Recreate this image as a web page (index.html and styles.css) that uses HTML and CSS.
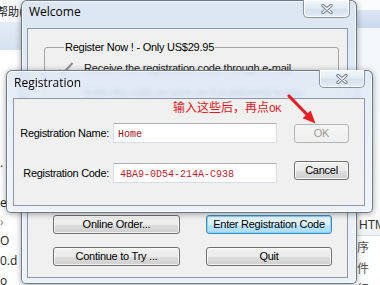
FILE: index.html
```html
<!DOCTYPE html>
<html>
<head>
<meta charset="utf-8">
<title>Registration</title>
<link rel="stylesheet" href="styles.css">
</head>
<body>
<div class="desk">
  <div class="bg-left">
    <div class="menu"><span class="menu-text">帮助(</span></div>
    <div class="band"></div>
    <ul class="files">
      <li>.</li>
      <li></li>
      <li>e</li>
      <li class="short">›</li>
      <li>O</li>
      <li>0.d</li>
      <li>o</li>
    </ul>
  </div>

  <div class="bg-right">
    <div class="r-top"></div>
    <div class="r-band"></div>
    <div class="r-body"></div>
    <div class="r-head">HTM</div>
    <div class="r-row">序</div>
    <div class="r-row">件</div>
    <div class="r-row">行</div>
  </div>

  <section class="win welcome">
    <header class="titlebar">
      <span class="title">Welcome</span>
      <span class="close"><svg width="12" height="10" viewBox="0 0 12 10"><path d="M2 1.5 L10 8.5 M10 1.5 L2 8.5" stroke="#707b88" stroke-width="3.4" stroke-linecap="round"/><path d="M2 1.5 L10 8.5 M10 1.5 L2 8.5" stroke="#fff" stroke-width="1.5" stroke-linecap="round"/></svg></span>
    </header>
    <div class="client">
      <fieldset class="group">
        <legend>Register Now ! - Only US$29.95</legend>
        <div class="opt">
          <svg class="tick" width="17" height="14" viewBox="0 0 17 14"><path d="M2 9 L6 12.5 L15.5 2" fill="none" stroke="#8a8f96" stroke-width="2"/></svg>
          <span>Receive the registration code through e-mail</span>
        </div>
        <div class="opt">
          <span class="opt-sub">Enter the code as soon as it is delivered to you</span>
        </div>
      </fieldset>
      <div class="actions">
        <button class="btn">Online Order...</button>
        <button class="btn default">Enter Registration Code</button>
        <button class="btn">Continue to Try ...</button>
        <button class="btn">Quit</button>
      </div>
    </div>
  </section>

  <section class="win registration">
    <header class="titlebar">
      <span class="title">Registration</span>
      <span class="close close-reg"><svg width="12" height="10" viewBox="0 0 12 10"><path d="M2 1.5 L10 8.5 M10 1.5 L2 8.5" stroke="#707b88" stroke-width="3.4" stroke-linecap="round"/><path d="M2 1.5 L10 8.5 M10 1.5 L2 8.5" stroke="#fff" stroke-width="1.5" stroke-linecap="round"/></svg></span>
    </header>
    <div class="client form">
      <span class="note">输入这些后，再点<span class="note-ok">OK</span></span>
      <label class="lbl" for="rname">Registration Name:</label>
      <input id="rname" class="field" value="Home" readonly>
      <button class="btn ok" disabled>OK</button>
      <label class="lbl" for="rcode">Registration Code:</label>
      <input id="rcode" class="field code" value="4BA9-0D54-214A-C938" readonly>
      <button class="btn cancel">Cancel</button>
    </div>
  </section>

  <svg class="arrow" width="40" height="40" viewBox="0 0 40 40">
    <path d="M9 6 L27 24.5" stroke="#ea1c24" stroke-width="3.2" stroke-linecap="round"/>
    <path d="M35.5 33.5 L22.6 28.3 L30.6 20.6 Z" fill="#ea1c24"/>
  </svg>
</div>
</body>
</html>
```

FILE: styles.css
```css
html, body {
  margin: 0;
  padding: 0;
}

body {
  width: 380px;
  height: 285px;
  overflow: hidden;
  background: #ffffff;
  font-family: "Liberation Sans", Arial, sans-serif;
}

.desk {
  position: relative;
  width: 380px;
  height: 285px;
  overflow: hidden;
}

/* ---------- background application pieces ---------- */
.bg-left {
  position: absolute;
  left: 0;
  top: 0;
  width: 21px;
  height: 285px;
  display: flex;
  flex-direction: column;
  background: #ffffff;
  overflow: hidden;
}

.bg-left > * {
  flex: none;
}

.menu {
  height: 22px;
  display: flex;
  align-items: center;
  background: #f7f9fc;
  overflow: hidden;
}

.menu-text {
  display: block;
  flex: none;
  width: 24px;
  margin-left: -3px;
  overflow: hidden;
  font: 11px/14px "Noto Sans CJK SC", sans-serif;
  color: #1a1a1a;
  white-space: nowrap;
}

.band {
  height: 28px;
  background: linear-gradient(#e3ecf6, #d6e2f0);
}

.files {
  list-style: none;
  margin: 103px 0 0;
  padding: 0;
}

.files li {
  height: 20px;
  font: 12px/20px "Open Sans", sans-serif;
  color: #222;
  white-space: nowrap;
  overflow: hidden;
}

.files li.short {
  height: 18px;
  line-height: 18px;
  color: #777;
}

.bg-right {
  position: absolute;
  left: 356px;
  top: 0;
  width: 24px;
  height: 285px;
  display: flex;
  flex-direction: column;
  background: #ffffff;
  overflow: hidden;
}

.bg-right > * {
  flex: none;
}

.r-top { height: 10px; background: #fbfcfe; }
.r-band { height: 18px; background: linear-gradient(#dce7f5, #c9d8ee); }
.r-body { height: 188px; background: linear-gradient(#f3f6fa, #fbfcfd); }

.r-head {
  height: 19px;
  padding-left: 3px;
  font: 12px/19px "Liberation Sans", sans-serif;
  color: #333;
  background: linear-gradient(#ffffff, #eef2f6);
  border-bottom: 1px solid #d6dde5;
  white-space: nowrap;
}

.r-row {
  height: 21px;
  padding-left: 1px;
  font: 12px/21px "Noto Sans CJK SC", sans-serif;
  color: #555;
}

/* ---------- windows ---------- */
.win {
  position: absolute;
  box-sizing: border-box;
  display: flex;
  flex-direction: column;
  border: 1px solid rgba(64, 82, 104, 0.75);
  border-radius: 6px 6px 5px 5px;
  background: linear-gradient(180deg, #dbe6f2 0%, #e6eef7 45%, #edf2f8 100%);
  box-shadow: inset 0 0 0 1px rgba(255, 255, 255, 0.7), 0 1px 6px rgba(0, 0, 0, 0.35);
}

.welcome {
  left: 21px;
  top: 0;
  width: 336px;
  height: 284px;
  padding: 0 8px 5px 5px;
}

.registration {
  left: 6px;
  top: 70px;
  width: 367px;
  height: 143px;
  padding: 0 7px 6px 6px;
  background: linear-gradient(180deg, rgba(220, 232, 245, 0.78) 0%, rgba(234, 240, 248, 0.88) 60%, rgba(238, 243, 249, 0.92) 100%);
  backdrop-filter: blur(2.5px);
}

.titlebar {
  height: 27px;
  flex: none;
  display: flex;
  align-items: flex-start;
  padding-top: 3px;
  box-sizing: border-box;
}

.title {
  font: 12px/16px "Open Sans", sans-serif;
  color: #000;
  padding-left: 2px;
}

.registration .title {
  padding-left: 1px;
  padding-top: 1px;
}

.close {
  margin-left: auto;
  margin-top: -4px;
  margin-right: -2px;
  width: 47px;
  height: 18px;
  box-sizing: border-box;
  display: flex;
  align-items: center;
  justify-content: center;
  border: 1px solid #8593a3;
  border-top: none;
  border-radius: 0 0 5px 5px;
  background: linear-gradient(#f4f8fc, #e0e9f3 50%, #d3dfec 51%, #e4edf6);
  box-shadow: inset 0 0 0 1px rgba(255, 255, 255, 0.8);
}

.close-reg {
  width: 46px;
  margin-right: 0;
}

.client {
  flex: 1;
  box-sizing: border-box;
  border: 1px solid #8c99a8;
  background: #f0f0f0;
}

.welcome .client {
  display: flex;
  flex-direction: column;
  padding: 12px 0 11px 16px;
}

.group {
  flex: none;
  margin: 0;
  width: 295px;
  height: 166px;
  box-sizing: border-box;
  padding: 7px 10px 0 12px;
  border: 1px solid #a4a4a4;
  border-radius: 3px;
}

.group legend {
  margin-left: 7px;
  padding: 0 1px;
  font: 11px/13px "Liberation Sans", sans-serif;
  letter-spacing: -0.25px;
  color: #000;
}

.opt {
  display: flex;
  align-items: center;
  gap: 10px;
  height: 14px;
  font: 11px/14px "Liberation Sans", sans-serif;
  letter-spacing: -0.2px;
  color: #1a1a1a;
  white-space: nowrap;
}

.opt + .opt {
  margin-top: 10px;
  padding-left: 27px;
  color: #3a5ea8;
}

.tick {
  flex: none;
}

.actions {
  margin-top: auto;
  margin-left: 9px;
  display: grid;
  grid-template-columns: 127px 126px;
  column-gap: 26px;
  row-gap: 13px;
}

.btn {
  height: 19px;
  box-sizing: border-box;
  padding: 0;
  font: 11px/17px "Liberation Sans", sans-serif;
  letter-spacing: -0.25px;
  color: #000;
  border: 1px solid #707070;
  border-radius: 3px;
  background: linear-gradient(#f2f2f2 0%, #ebebeb 50%, #dddddd 51%, #cfcfcf 100%);
  box-shadow: inset 0 0 0 1px rgba(255, 255, 255, 0.75);
}

.btn.default {
  border-color: #3c8cc0;
  background: linear-gradient(#eaf6fd 0%, #d9f0fc 50%, #bee6fd 51%, #a9dbf6 100%);
  box-shadow: inset 0 0 0 1px #8ed2f4;
}

/* ---------- registration form ---------- */
.form {
  position: relative;
  display: grid;
  grid-template-columns: 95px 164px 68px;
  grid-template-rows: 20px 20px;
  column-gap: 4px;
  row-gap: 20px;
  align-content: start;
  padding-top: 24px;
}

.note {
  position: absolute;
  left: 159px;
  top: 1px;
  font: 12px/14px "Noto Sans CJK SC", sans-serif;
  color: #e3161d;
  white-space: nowrap;
}

.note-ok {
  font: 11px/14px "Liberation Mono", monospace;
  letter-spacing: -0.5px;
}

.lbl {
  justify-self: end;
  align-self: center;
  font: 11px/14px "Liberation Sans", sans-serif;
  letter-spacing: -0.3px;
  color: #000;
  white-space: nowrap;
}

.field {
  width: 164px;
  height: 20px;
  box-sizing: border-box;
  margin: 0;
  padding: 2px 4px 0;
  border: 1px solid #d9dde3;
  border-top-color: #abb0b8;
  background: #fff;
  font: 10px "Liberation Mono", monospace;
  color: #9e1224;
  outline: none;
}

.field.code {
  padding-left: 6px;
  color: #c41a30;
}

.btn.ok,
.btn.cancel {
  justify-self: end;
  align-self: start;
  width: 55px;
}

.btn.ok {
  margin-top: 1px;
  color: #9a9a9a;
  border-color: #b3b6b9;
  background: linear-gradient(#f5f5f5, #efefef);
  box-shadow: none;
}

.btn.cancel {
  margin-top: -2px;
}

/* ---------- annotation arrow ---------- */
.arrow {
  position: absolute;
  left: 280px;
  top: 90px;
}
```
